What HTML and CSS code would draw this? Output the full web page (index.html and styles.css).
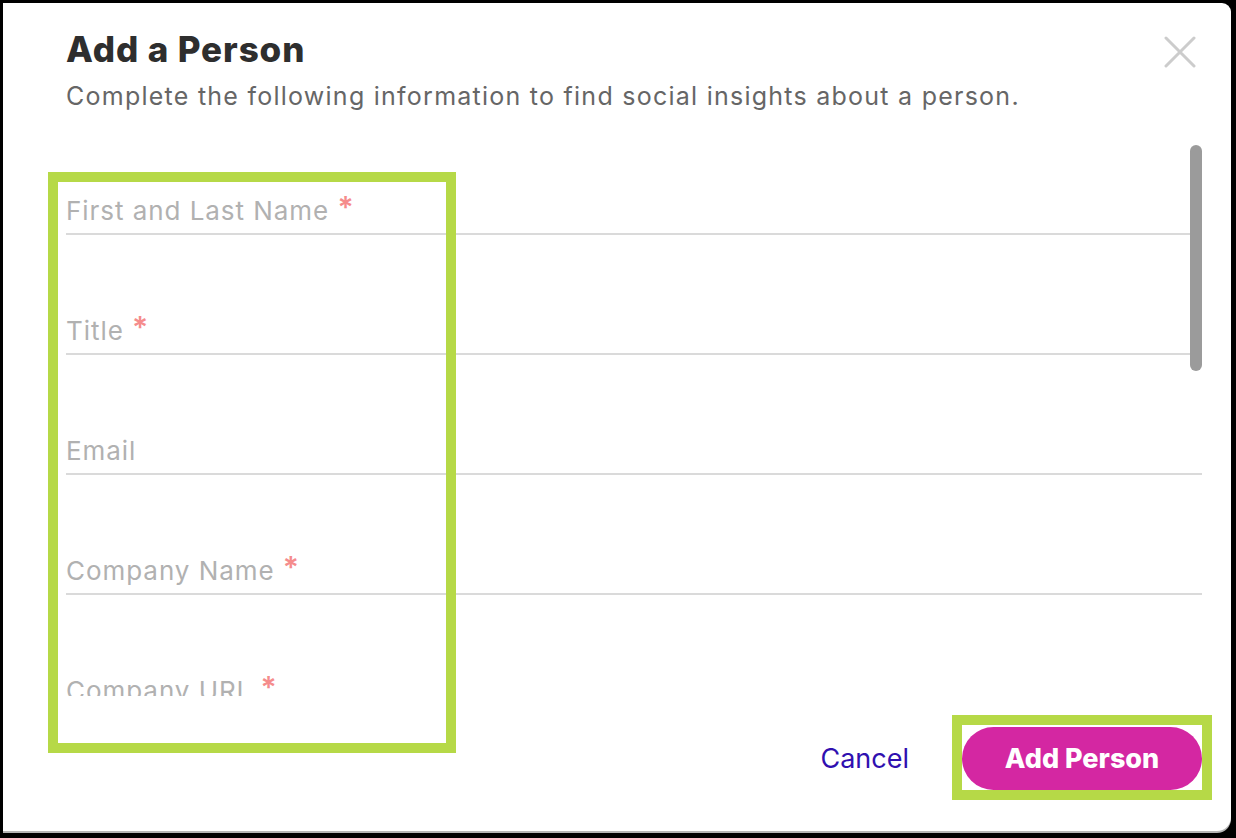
FILE: index.html
```html
<!DOCTYPE html>
<html lang="en">
<head>
<meta charset="utf-8">
<title>Add a Person</title>
<link rel="stylesheet" href="styles.css">
</head>
<body>
<div class="modal">
  <div class="header">
    <div class="header-text">
      <h1 class="title">Add a Person</h1>
      <p class="subtitle">Complete the following information to find social insights about a person.</p>
    </div>
    <button class="close" aria-label="Close">
      <svg width="32" height="32" viewBox="0 0 32 32"><path d="M2 2 L30 30 M30 2 L2 30" stroke="#cccccc" stroke-width="3" stroke-linecap="round" fill="none"/></svg>
    </button>
  </div>
  <div class="form-scroll">
    <div class="field"><span class="label">First and Last Name <span class="req">*</span></span></div>
    <div class="field"><span class="label">Title <span class="req">*</span></span></div>
    <div class="field"><span class="label">Email</span></div>
    <div class="field"><span class="label">Company Name <span class="req">*</span></span></div>
    <div class="field"><span class="label">Company URL <span class="req">*</span></span></div>
    <div class="scroll-thumb"></div>
  </div>
  <div class="footer">
    <button class="cancel">Cancel</button>
    <div class="btn-wrap"><button class="primary">Add Person</button></div>
  </div>
  <div class="highlight-form"></div>
</div>
</body>
</html>
```
FILE: styles.css
```css
html, body {
  margin: 0;
  padding: 0;
}
body {
  background: #000;
  width: 1236px;
  height: 838px;
  overflow: hidden;
  font-family: Inter, "Noto Sans", sans-serif;
}
.modal {
  position: relative;
  margin: 3px 5px 0 3px;
  height: 828px;
  background: #fff;
  border-radius: 0 9px 14px 0;
  box-shadow: 0 2px 0 #b5b5b5;
  display: flex;
  flex-direction: column;
}
.header {
  display: flex;
  justify-content: space-between;
  align-items: flex-start;
  padding: 26px 35px 0 63px;
}
.title {
  margin: 0;
  font-size: 35px;
  line-height: 40px;
  font-weight: 800;
  color: #2e2e2e;
  letter-spacing: 0.9px;
}
.subtitle {
  margin: 11px 0 0 0;
  font-size: 25px;
  line-height: 32px;
  font-weight: 400;
  color: #666;
  letter-spacing: 1.25px;
}
.close {
  margin-top: 7px;
  padding: 0;
  border: 0;
  background: none;
  width: 32px;
  height: 32px;
}
.form-scroll {
  position: relative;
  margin: 27px 29px 0 63px;
  height: 557px;
  overflow: hidden;
  padding-top: 56px;
  box-sizing: border-box;
  display: flex;
  flex-direction: column;
  gap: 80px;
}
.field {
  flex: none;
  border-bottom: 2px solid #dadada;
  padding-bottom: 6px;
}
.label {
  display: block;
  font-size: 26px;
  line-height: 32px;
  height: 32px;
  color: #b1b1b1;
  letter-spacing: 0.95px;
}
.req {
  color: #f58c8c;
  font-size: 30px;
  font-weight: 600;
  line-height: 0;
  position: relative;
  top: -2px;
}
.scroll-thumb {
  position: absolute;
  right: 0;
  top: 6px;
  width: 12px;
  height: 226px;
  border-radius: 6px;
  background: #9b9b9b;
}
.footer {
  display: flex;
  justify-content: flex-end;
  align-items: center;
  gap: 53px;
  margin-top: 31px;
  padding-right: 29px;
}
.cancel {
  border: 0;
  background: none;
  padding: 0;
  font-family: Inter, "Noto Sans", sans-serif;
  font-size: 27px;
  color: #3010b0;
}
.btn-wrap {
  position: relative;
}
.btn-wrap::after {
  content: "";
  position: absolute;
  left: -10px;
  right: -10px;
  top: -12px;
  bottom: -10px;
  border: 10px solid #b6d947;
  pointer-events: none;
}
.primary {
  display: block;
  width: 240px;
  height: 63px;
  border: 0;
  border-radius: 32px;
  background: #d427a2;
  color: #fff;
  font-family: Inter, "Noto Sans", sans-serif;
  font-size: 27px;
  font-weight: 800;
}
.highlight-form {
  position: absolute;
  left: 45px;
  top: 169px;
  width: 408px;
  height: 581px;
  box-sizing: border-box;
  border: 10px solid #b6d947;
  pointer-events: none;
}
```
